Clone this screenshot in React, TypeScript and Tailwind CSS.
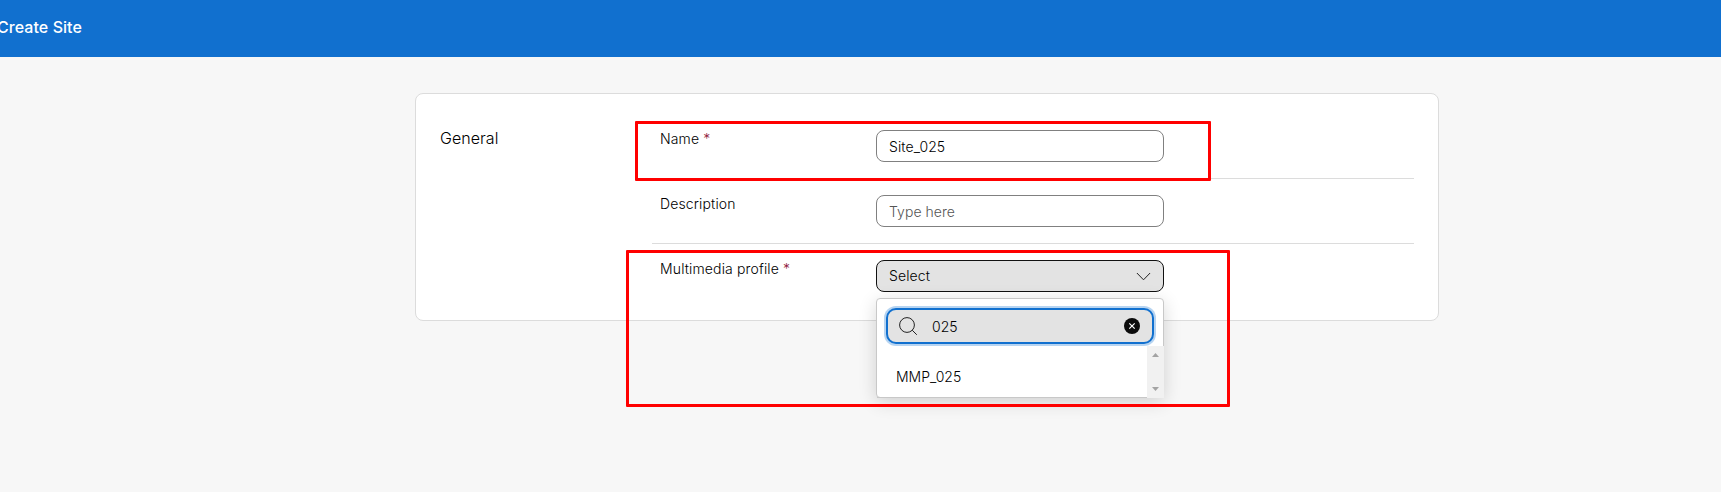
import type { ReactNode } from 'react';

function Row({ label, required, divider = true, children }: { label: string; required?: boolean; divider?: boolean; children: ReactNode }) {
  return (
    <div className={`flex h-[65px] items-start pt-4 pl-2 ${divider ? 'border-b border-[#dcdcdc]' : ''}`}>
      <div className="-mt-px w-[216px] shrink-0 text-[14px] leading-5 font-light tracking-[0.14px] text-black">
        {label}
        {required && <span className="text-[#8f1a3c]"> *</span>}
      </div>
      {children}
    </div>
  );
}

function Dropdown() {
  return (
    <div className="absolute top-[38px] left-0 z-10 flex h-[100px] w-[288px] flex-col rounded-[4px] border border-[#c8c8c8] bg-white shadow-[0_4px_18px_rgba(0,0,0,0.16)]">
      <div className="mx-[9px] mt-[9px] flex h-9 shrink-0 items-center rounded-[10px] border-2 border-[#1170cf] bg-[#e3e3e3] pr-3 pl-[11px] shadow-[0_0_0_2px_rgba(17,112,207,0.3)]">
        <svg width="18" height="18" viewBox="0 0 18 18" fill="none" stroke="#222" strokeWidth="1">
          <circle cx="8" cy="8" r="7.4" />
          <path d="M13.2 13.2 17.8 17.8" />
        </svg>
        <span className="ml-[15px] flex-1 pt-[2px] text-[14px] leading-5 font-light text-black">025</span>
        <svg width="16" height="16" viewBox="0 0 16 16">
          <circle cx="8" cy="8" r="8" fill="#0b0b0b" />
          <path d="m5.3 5.3 5.4 5.4m0-5.4-5.4 5.4" stroke="#fff" strokeWidth="1.2" />
        </svg>
      </div>
      <div className="-mr-px -mb-px mt-[2px] flex flex-1">
        <div className="flex flex-1 items-center border-b border-[#c8c8c8] pt-[10px] pl-[19px] text-[14px] leading-5 font-light text-black">MMP_025</div>
        <div className="flex w-[17px] flex-col items-center justify-between bg-[#f1f1f1] py-[7px]">
          <svg width="7" height="4" viewBox="0 0 7 4" fill="#a3a3a3"><path d="M3.5 0 7 4H0Z" /></svg>
          <svg width="7" height="4" viewBox="0 0 7 4" fill="#a3a3a3"><path d="M3.5 4 7 0H0Z" /></svg>
        </div>
      </div>
    </div>
  );
}

export default function App() {
  return (
    <div className="relative h-[492px] w-[1721px] overflow-hidden bg-[#f7f7f7] font-['Inter',sans-serif]">
      <header className="flex h-[57px] items-center bg-[#1170cf]">
        <h1 className="-ml-[3px] -mt-[4px] text-[16px] leading-6 font-medium tracking-[0.06px] text-white">Create Site</h1>
      </header>
      <main className="mt-9 ml-[415px] flex h-[228px] w-[1024px] rounded-[8px] border border-[#dcdcdc] bg-white pt-5 pr-6 pl-6">
        <h2 className="w-[212px] shrink-0 pt-3 text-[16px] leading-6 font-light tracking-[0.05px] text-black">General</h2>
        <div className="flex-1">
          <Row label="Name" required>
            <div className="flex h-8 w-[288px] items-center rounded-[8px] border border-[#808080] bg-white px-3 text-[14px] font-light tracking-[0.1px] text-black">Site_025</div>
          </Row>
          <Row label="Description">
            <div className="flex h-8 w-[288px] items-center rounded-[8px] border border-[#808080] bg-white px-3 text-[14px] font-light tracking-[0.05px] text-[#555]">Type here</div>
          </Row>
          <Row label="Multimedia profile" required divider={false}>
            <div className="relative">
              <div className="flex h-8 w-[288px] items-center justify-between rounded-[8px] border border-[#111] bg-[#e3e3e3] px-3 text-[14px] font-light tracking-[0.1px] text-black">
                <span className="pb-[2px]">Select</span>
                <svg width="15" height="9" viewBox="0 0 15 9" fill="none" stroke="#222" strokeWidth="1"><path d="m.9 1 6.6 6.8 6.6-6.8" /></svg>
              </div>
              <Dropdown />
            </div>
          </Row>
        </div>
      </main>
      <div className="absolute top-[121px] left-[635px] z-20 h-[60px] w-[576px] rounded-[1px] border-3 border-[#ff0000]" />
      <div className="absolute top-[250px] left-[626px] z-20 h-[157px] w-[604px] rounded-[1px] border-3 border-[#ff0000]" />
    </div>
  );
}
